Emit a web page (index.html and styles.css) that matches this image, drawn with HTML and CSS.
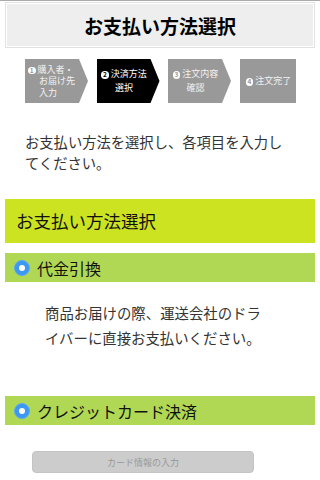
FILE: index.html
```html
<!DOCTYPE html>
<html lang="ja">
<head>
<meta charset="utf-8">
<link rel="stylesheet" href="styles.css">
</head>
<body>
<div class="topbar"></div>
<header class="head"><div class="head-in"><h1>お支払い方法選択</h1></div></header>
<ol class="steps">
  <li class="step step1"><div class="st-text"><span class="num">1</span>購入者・<br>お届け先<br>入力</div></li>
  <li class="step step-on"><div class="st-text"><span class="num">2</span>決済方法<br>選択</div></li>
  <li class="step"><div class="st-text"><span class="num">3</span>注文内容<br>確認</div></li>
  <li class="step step-last"><div class="st-text"><span class="num">4</span>注文完了</div></li>
</ol>
<p class="intro">お支払い方法を選択し、各項目を入力してください。</p>
<h2 class="sec">お支払い方法選択</h2>
<div class="opt"><span class="radio"></span><span class="opt-label">代金引換</span></div>
<p class="desc">商品お届けの際、運送会社のドライバーに直接お支払いください。</p>
<div class="opt opt2"><span class="radio"></span><span class="opt-label">クレジットカード決済</span></div>
<div class="btn-row"><button class="btn" disabled>カード情報の入力</button></div>
</body>
</html>
```
FILE: styles.css
```css
* { box-sizing: border-box; }
html, body { margin: 0; padding: 0; background: #fff; }
body {
  font-family: "Noto Sans CJK JP", "Noto Sans", sans-serif;
  color: #000;
  width: 320px;
  overflow: hidden;
}
.topbar { height: 1px; background: #ababab; }
.head {
  margin: 1px 5px 0;
  border: 1px solid #e2e2e2;
  padding: 1px;
}
.head-in {
  height: 42px;
  background: #eeeeee;
  display: flex;
  align-items: center;
  justify-content: center;
}
.head h1 {
  margin: 0;
  font-size: 19px;
  font-weight: bold;
  line-height: 1;
}
.steps {
  list-style: none;
  margin: 11px 0 0;
  padding: 0 0 0 25px;
  display: flex;
  gap: 8px;
}
.step {
  width: 63.5px;
  height: 44px;
  background: #999999;
  color: #f2f2f2;
  clip-path: polygon(0 0, 54px 0, 63px 50%, 54px 100%, 0 100%);
  display: flex;
  align-items: center;
  font-size: 9px;
  line-height: 14px;
}
.step .st-text { width: 54px; text-align: center; padding-left: 1px; }
.step1 { line-height: 11.5px; }
.step1 .st-text { text-align: left; padding-left: 3px; }
.step1 .st-text { padding-left: 14px; text-indent: -11px; }
.step-on { background: #000; color: #fff; }
.step-last { width: 56px; clip-path: none; }
.step-last .st-text { width: 56px; padding-left: 2px; }
.num {
  display: inline-block;
  width: 7.5px;
  height: 7.5px;
  border-radius: 50%;
  background: #fff;
  color: #999;
  font-size: 6.5px;
  font-weight: bold;
  line-height: 7.5px;
  text-align: center;
  text-indent: 0;
  margin-right: 2px;
  vertical-align: 0px;
}
.step-on .num { color: #000; }
.intro {
  margin: 28px 0 0;
  padding: 0 32px 0 25px;
  font-size: 14.3px;
  line-height: 21px;
  color: #333;
}
.sec {
  margin: 26px 5px 0;
  height: 44px;
  background: #cce322;
  font-size: 17.5px;
  font-weight: normal;
  line-height: 44px;
  padding-left: 11px;
  color: #111;
}
.opt {
  margin: 10px 5px 0;
  height: 29px;
  background: #b0d854;
  display: flex;
  align-items: center;
  padding-left: 9px;
}
.opt2 { margin-top: 46.5px; }
.radio {
  width: 16px;
  height: 16px;
  border-radius: 50%;
  background: #3d98f2;
  border: 1px solid #5aa8f5;
  display: flex;
  align-items: center;
  justify-content: center;
  flex: none;
}
.radio::after {
  content: "";
  width: 6px;
  height: 6px;
  border-radius: 50%;
  background: #fff;
}
.opt-label {
  font-size: 16px;
  margin-left: 7px;
  color: #111;
}
.desc {
  margin: 17.5px 0 0;
  padding: 0 50px 0 45px;
  font-size: 14.4px;
  line-height: 25px;
  color: #333;
}
.btn-row { margin-top: 26px; padding-left: 32px; }
.btn {
  display: block;
  width: 222px;
  height: 22px;
  border: 1px solid #c4c4c4;
  border-radius: 4px;
  background: #cccccc;
  color: #999;
  font-family: inherit;
  font-size: 9px;
  padding: 0;
}
```
